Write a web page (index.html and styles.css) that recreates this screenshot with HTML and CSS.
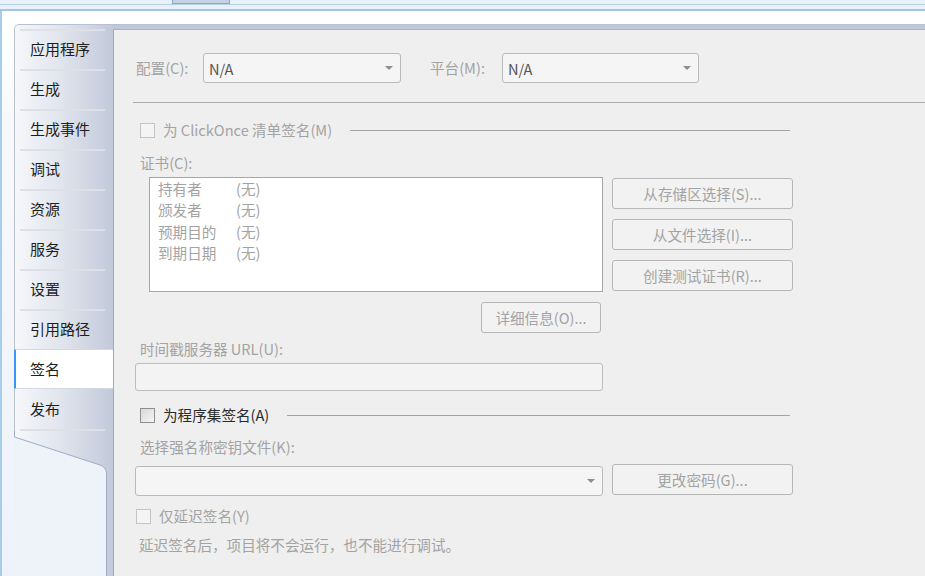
FILE: index.html
```html
<!DOCTYPE html>
<html lang="zh-CN">
<head>
    <meta charset="UTF-8">
    <title>签名</title>
    <link rel="stylesheet" href="styles.css">
</head>
<body>
    <div class="titlebar">
        <div class="doc-strip"><div class="doc-tab"></div></div>
    </div>

    <div class="workspace">
        <nav class="side">
            <div class="side-top"></div>
            <ul class="tab-list">
                <li class="tab">应用程序</li>
                <li class="tab">生成</li>
                <li class="tab">生成事件</li>
                <li class="tab">调试</li>
                <li class="tab">资源</li>
                <li class="tab">服务</li>
                <li class="tab">设置</li>
                <li class="tab">引用路径</li>
                <li class="tab active">签名</li>
                <li class="tab">发布</li>
                <li class="tab-end"></li>
            </ul>
            <div class="side-foot">
                <svg width="99" height="145" viewBox="0 0 99 145">
                    <path d="M0 6 L86 34 Q92 36 92.5 42 L92.5 145 L0 145 Z" fill="#eef3fa"/>
                    <path d="M0.5 0 V6 L86 34 Q92 36 92.5 42 V145" fill="none" stroke="#9facc4" stroke-width="1"/>
                </svg>
            </div>
        </nav>

        <main class="main">
            <div class="main-top"></div>
            <div class="content">
                <div class="cfg-row">
                    <span class="lbl cfg-lbl">配置(C):</span>
                    <div class="combo cfg-combo"><span>N/A</span><i class="arrow"></i></div>
                    <span class="lbl plat-lbl">平台(M):</span>
                    <div class="combo plat-combo"><span>N/A</span><i class="arrow"></i></div>
                </div>

                <div class="rule"></div>

                <div class="group-head">
                    <span class="check"></span>
                    <span class="lbl">为 ClickOnce 清单签名(M)</span>
                    <span class="group-line"></span>
                </div>

                <div class="lbl field-lbl">证书(C):</div>
                <div class="cert-row">
                    <div class="cert-list">
                        <div class="cert-item"><span class="cert-key">持有者</span><span>(无)</span></div>
                        <div class="cert-item"><span class="cert-key">颁发者</span><span>(无)</span></div>
                        <div class="cert-item"><span class="cert-key">预期目的</span><span>(无)</span></div>
                        <div class="cert-item"><span class="cert-key">到期日期</span><span>(无)</span></div>
                    </div>
                    <div class="btn-col">
                        <button class="btn">从存储区选择(S)...</button>
                        <button class="btn">从文件选择(I)...</button>
                        <button class="btn">创建测试证书(R)...</button>
                    </div>
                </div>
                <button class="btn details-btn">详细信息(O)...</button>

                <div class="lbl field-lbl ts-lbl">时间戳服务器 URL(U):</div>
                <div class="textbox"></div>

                <div class="group-head asm-head">
                    <span class="check enabled"></span>
                    <span class="lbl on">为程序集签名(A)</span>
                    <span class="group-line"></span>
                </div>

                <div class="lbl field-lbl key-lbl">选择强名称密钥文件(K):</div>
                <div class="key-row">
                    <div class="combo key-combo"><i class="arrow"></i></div>
                    <button class="btn">更改密码(G)...</button>
                </div>

                <div class="delay-row">
                    <span class="check"></span>
                    <span class="lbl">仅延迟签名(Y)</span>
                </div>
                <div class="lbl note">延迟签名后，项目将不会运行，也不能进行调试。</div>
            </div>
        </main>
    </div>
</body>
</html>
```

FILE: styles.css
```css
html, body {
    margin: 0;
    padding: 0;
}

body {
    width: 925px;
    height: 576px;
    overflow: hidden;
    display: flex;
    flex-direction: column;
    font-family: "Noto Sans CJK SC", "Microsoft YaHei", sans-serif;
    font-size: 14.6px;
    color: #222;
    background: #fff;
}

/* document tab strip at the very top */
.titlebar {
    height: 9px;
    background: #e8f1fa;
    border-bottom: 2px solid #a3c6de;
}

.doc-strip {
    height: 4px;
    border-bottom: 1px solid #b6d0e4;
}

.doc-tab {
    margin-left: 172px;
    width: 56px;
    height: 3px;
    background: #c4d2e3;
    border: 1px solid #8fa8c2;
    border-top: none;
}

.workspace {
    flex: 1;
    display: flex;
    padding: 13px 0 0 12px;
    border-left: 2px solid #a8cde6;
    background: linear-gradient(#fff 0, #fff 13px, #f6f9fc 110px, #eef3fa 100%);
}

/* left tab column */
.side {
    width: 99px;
    display: flex;
    flex-direction: column;
    background: linear-gradient(90deg, #f6f8fb, #dfe3ec 50%, #c2c9da);
    border-top-left-radius: 5px;
    overflow: hidden;
}

.side-top {
    height: 4px;
    border-top: 1px solid #b9c1d1;
    border-left: 1px solid #b9c1d1;
    border-top-left-radius: 5px;
}

.tab-list {
    list-style: none;
    margin: 0;
    padding: 0;
    display: flex;
    flex-direction: column;
    border-left: 1px solid #b9c1d1;
}

.tab {
    height: 40px;
    line-height: 40px;
    padding-left: 15px;
    font-size: 15px;
    color: #1e1e1e;
    background: linear-gradient(#dfe0e7, #dfe0e7) no-repeat 5px 0 / 85px 2px;
}

.tab.active {
    margin-left: -2px;
    padding-left: 14px;
    height: 38px;
    line-height: 38px;
    background: #fff;
    border-left: 3px solid #3a96f5;
    border-top: 1px solid #d3d8e2;
    border-bottom: 1px solid #d3d8e2;
}

.tab.active + .tab {
    background: none;
}

.tab-end {
    height: 2px;
    background: linear-gradient(#dfe0e7, #dfe0e7) no-repeat 5px 0 / 85px 2px;
}

.side-foot {
    flex: 1;
}

.side-foot svg {
    display: block;
}

/* right page */
.main {
    flex: 1;
    display: flex;
    flex-direction: column;
}

.main-top {
    height: 4px;
    border-top: 1px solid #b9c1d1;
    background: #bfc8da;
}

.content {
    flex: 1;
    padding: 23px 0 0 21px;
    background: #efefef;
    border-top: 1px solid #b3b3b3;
    border-left: 1px solid #a4a8b4;
}

.lbl {
    color: #a3a3a3;
    line-height: 20px;
    white-space: nowrap;
}

.lbl.on {
    color: #2a2a2a;
}

.cfg-row {
    display: flex;
    align-items: center;
    height: 30px;
}

.cfg-lbl {
    margin-left: 1px;
    width: 67px;
}

.plat-lbl {
    margin-left: 29px;
    width: 72px;
}

.combo {
    box-sizing: border-box;
    height: 30px;
    display: flex;
    align-items: center;
    padding-left: 5px;
    border: 1px solid #b9b9b9;
    border-radius: 3px;
    background: #f5f5f5;
    color: #555;
}

.cfg-combo {
    width: 198px;
}

.plat-combo {
    width: 197px;
}

.arrow {
    margin-left: auto;
    margin-right: 7px;
    width: 0;
    height: 0;
    border-left: 4px solid transparent;
    border-right: 4px solid transparent;
    border-top: 4px solid #8d8d8d;
}

.rule {
    margin: 19px 0 0 -2px;
    border-top: 1px solid #a9a9a9;
}

.group-head {
    margin-top: 17px;
    width: 650px;
    height: 20px;
    display: flex;
    align-items: center;
    padding-left: 5px;
}

.asm-head {
    margin-top: 14px;
}

.check {
    box-sizing: border-box;
    width: 15px;
    height: 15px;
    margin-right: 8px;
    border: 1px solid #c4c4c4;
    background: #f4f4f4;
}

.check.enabled {
    border-color: #8e8e8e;
    background: linear-gradient(135deg, #d9d9d9, #f5f5f5);
}

.group-line {
    flex: 1;
    height: 1px;
    margin-left: 18px;
    background: #a3a3a3;
}

.field-lbl {
    margin-top: 13px;
    height: 20px;
    padding-left: 5px;
}

.cert-row {
    margin-top: 4px;
    display: flex;
}

.cert-list {
    box-sizing: border-box;
    margin-left: 14px;
    width: 454px;
    height: 115px;
    padding: 0 0 0 8px;
    border: 1px solid #a6a6a6;
    background: #fff;
    color: #a3a3a3;
}

.cert-item {
    display: flex;
    line-height: 21.3px;
}

.cert-key {
    width: 78px;
}

.btn-col {
    margin-left: 9px;
    padding-top: 1px;
    display: flex;
    flex-direction: column;
    gap: 10px;
}

.btn {
    box-sizing: border-box;
    width: 181px;
    height: 31px;
    padding: 0;
    border: 1px solid #b6b6b6;
    border-radius: 3px;
    background: #f2f2f2;
    color: #a3a3a3;
    font: inherit;
}

.details-btn {
    display: block;
    margin: 10px 0 0 346px;
    width: 120px;
}

.ts-lbl {
    margin-top: 6px;
}

.textbox {
    box-sizing: border-box;
    margin-top: 4px;
    width: 468px;
    height: 28px;
    border: 1px solid #bcbcbc;
    border-radius: 3px;
    background: #f3f3f3;
}

.key-lbl {
    margin-top: 12px;
}

.key-row {
    margin-top: 7px;
    height: 32px;
    display: flex;
    align-items: flex-start;
}

.key-combo {
    margin-top: 2px;
    width: 468px;
}

.key-row .btn {
    margin-left: 9px;
}

.delay-row {
    margin-top: 10px;
    height: 20px;
    display: flex;
    align-items: center;
    padding-left: 1px;
}

.note {
    margin-top: 9px;
    padding-left: 4px;
}
```
